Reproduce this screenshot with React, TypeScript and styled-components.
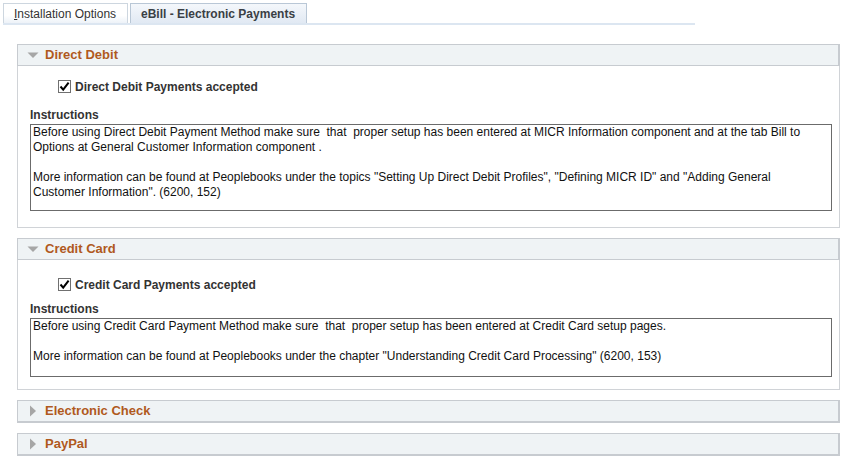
import React from "react";
import styled, { createGlobalStyle } from "styled-components";

const Global = createGlobalStyle`
  html, body { margin: 0; padding: 0; background: #ffffff; }
  body { font-family: "Liberation Sans", Arial, sans-serif; font-size: 12px; color: #333333; }
`;

const Page = styled.div`
  padding-top: 3px;
  width: 846px;
`;

const TabBar = styled.div`
  display: flex;
  gap: 2px;
  margin-left: 3px;
  width: 692px;
  border-bottom: 2px solid #dce6f1;
`;

const Tab = styled.div<{ $active?: boolean }>`
  height: 20px;
  box-sizing: border-box;
  display: flex;
  align-items: center;
  padding: 0 ${(p) => (p.$active ? "10px" : "10px")};
  border: 1px solid ${(p) => (p.$active ? "#b9c7d6" : "#cdd6df")};
  border-bottom: none;
  background: ${(p) =>
    p.$active
      ? "linear-gradient(#f4f7fb, #e1e9f3)"
      : "linear-gradient(#ffffff 60%, #edf2f8)"};
  font-size: 12px;
  font-weight: ${(p) => (p.$active ? "bold" : "normal")};
  color: ${(p) => (p.$active ? "#3a3f45" : "#333333")};
  white-space: nowrap;
  width: ${(p) => (p.$active ? "177px" : "125px")};
  u { text-decoration: underline; }
`;

const Sections = styled.div`
  margin: 19px 0 0 17px;
  width: 823px;
  display: flex;
  flex-direction: column;
  gap: 10px;
`;

const Group = styled.section``;

const Header = styled.div<{ $open: boolean }>`
  height: 20px;
  display: flex;
  align-items: center;
  gap: 6px;
  padding-left: 9px;
  background: #eff3f5;
  border: 1px solid #c7cbd0;
  border-right-width: 2px;
  border-bottom-width: ${(p) => (p.$open ? "1px" : "2px")};
`;

const Title = styled.span`
  font-size: 13px;
  font-weight: bold;
  color: #b0591d;
  line-height: 20px;
`;

const Body = styled.div<{ $top: number; $bottom: number }>`
  border: 1px solid #d0d3d7;
  border-top: none;
  padding: ${(p) => p.$top}px 0 ${(p) => p.$bottom}px 12px;
`;

const CheckRow = styled.div`
  display: flex;
  align-items: center;
  gap: 4px;
  margin-left: 28px;
  height: 13px;
`;

const Box = styled.span`
  width: 13px;
  height: 13px;
  box-sizing: border-box;
  border: 1px solid #707070;
  background: #ffffff;
  display: inline-flex;
  align-items: center;
  justify-content: center;
`;

const CheckLabel = styled.span`
  font-weight: bold;
  font-size: 12px;
  color: #333333;
`;

const FieldLabel = styled.div<{ $gap: number }>`
  margin-top: ${(p) => p.$gap}px;
  font-weight: bold;
  font-size: 12px;
  line-height: 14px;
  color: #333333;
`;

const TextBox = styled.div<{ $h: number }>`
  margin-top: 2px;
  width: 802px;
  height: ${(p) => p.$h}px;
  box-sizing: border-box;
  border: 1px solid #6b6b6b;
  padding: 0 20px 0 2px;
  font-size: 12px;
  line-height: 15px;
  color: #111111;
  white-space: pre-wrap;
  overflow: hidden;
`;

const Arrow = ({ open }: { open: boolean }) => (
  <svg width="12" height="12" viewBox="0 0 12 12">
    {open ? (
      <path d="M0.5 3.5 H11.5 L6 9 Z" fill="#a6a6a6" />
    ) : (
      <path d="M3 0.5 L9 6 L3 11.5 Z" fill="#a6a6a6" />
    )}
  </svg>
);

const Check = () => (
  <svg width="11" height="11" viewBox="0 0 11 11">
    <path d="M1.5 5.5 L4.2 8.6 L9.6 1.6" stroke="#000" strokeWidth="2" fill="none" />
  </svg>
);

type Sec = {
  title: string;
  open: boolean;
  check?: string;
  text?: string;
  top?: number;
  gap?: number;
  h?: number;
  bottom?: number;
};

const sections: Sec[] = [
  {
    title: "Direct Debit",
    open: true,
    check: "Direct Debit Payments accepted",
    text:
      "Before using Direct Debit Payment Method make sure  that  proper setup has been entered at MICR Information component and at the tab Bill to Options at General Customer Information component .\n\nMore information can be found at Peoplebooks under the topics \"Setting Up Direct Debit Profiles\", \"Defining MICR ID\" and \"Adding General Customer Information\". (6200, 152)",
    top: 14,
    gap: 15,
    h: 87,
    bottom: 16,
  },
  {
    title: "Credit Card",
    open: true,
    check: "Credit Card Payments accepted",
    text:
      "Before using Credit Card Payment Method make sure  that  proper setup has been entered at Credit Card setup pages.\n\nMore information can be found at Peoplebooks under the chapter \"Understanding Credit Card Processing\" (6200, 153)",
    top: 18,
    gap: 11,
    h: 59,
    bottom: 12,
  },
  { title: "Electronic Check", open: false },
  { title: "PayPal", open: false },
];

export default function App() {
  return (
    <Page>
      <Global />
      <TabBar>
        <Tab>
          <span>
            <u>I</u>nstallation Options
          </span>
        </Tab>
        <Tab $active>eBill - Electronic Payments</Tab>
      </TabBar>
      <Sections>
        {sections.map((s) => (
          <Group key={s.title}>
            <Header $open={s.open}>
              <Arrow open={s.open} />
              <Title>{s.title}</Title>
            </Header>
            {s.open && (
              <Body $top={s.top ?? 14} $bottom={s.bottom ?? 16}>
                <CheckRow>
                  <Box>
                    <Check />
                  </Box>
                  <CheckLabel>{s.check}</CheckLabel>
                </CheckRow>
                <FieldLabel $gap={s.gap ?? 15}>Instructions</FieldLabel>
                <TextBox $h={s.h ?? 87}>{s.text}</TextBox>
              </Body>
            )}
          </Group>
        ))}
      </Sections>
    </Page>
  );
}
